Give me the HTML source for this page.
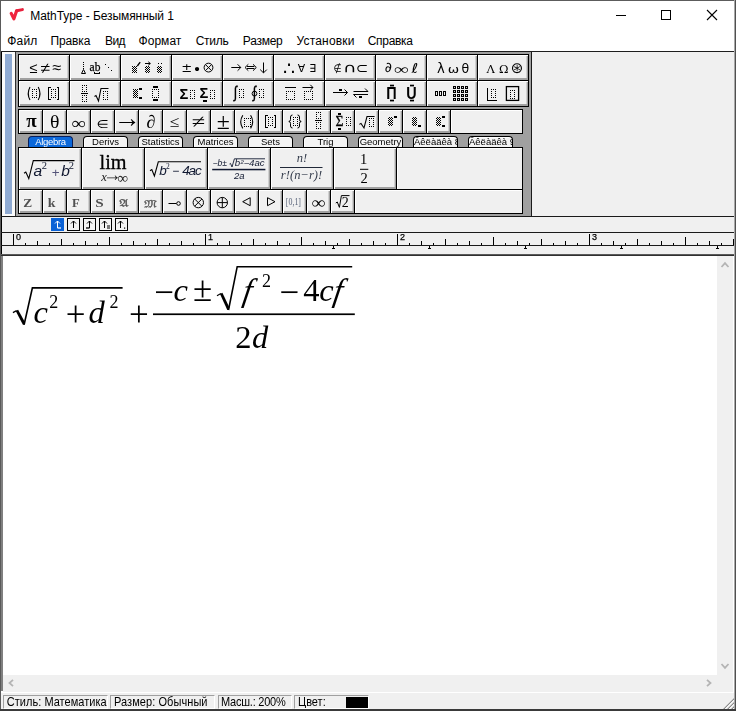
<!DOCTYPE html>
<html lang="ru"><head><meta charset="utf-8"><title>MathType - Безымянный 1</title>
<style>
html,body{margin:0;padding:0}
body{width:736px;height:711px;position:relative;overflow:hidden;background:#f0f0f0;font-family:"Liberation Sans",sans-serif;color:#000}
body>div,body>span,body>svg,.a{position:absolute}
span{white-space:nowrap}
.t12{font-size:12px;line-height:14px}
.b{background:#f0f0f0;box-sizing:border-box;box-shadow:inset 1px 1px 0 #fff,inset -1px 0 0 #a0a0a0,inset 0 -2px 0 #a0a0a0,inset -2px 0 0 #d0d0d0}
.b.e{box-shadow:inset 1px 1px 0 #fff}
.tab{width:45px;height:11px;box-sizing:border-box;border:1px solid #000;border-bottom:none;border-radius:4px 4px 0 0;background:#f4f4f4;font-size:9.5px;line-height:10px;text-align:center;overflow:hidden;box-shadow:inset 1px 1px 0 #fff}
.tab span{position:relative;top:-0.5px}
.tab.sel{background:#0b68da;border-color:#0a1e58;color:#fff;box-shadow:none}
.rl{font-size:9px;line-height:9px;color:#000;will-change:transform;-webkit-text-stroke:0.25px #000}
.pn,.tab{will-change:transform}
.pn{box-sizing:border-box;border:1px solid;border-color:#a0a0a0 #fff #fff #a0a0a0;font-size:11px;line-height:12px;overflow:hidden;height:13px}
.pn span{position:absolute;left:4px;top:0;transform:scaleY(1.09);transform-origin:0 10px}
</style></head>
<body>
<div class="a" style="left:0;top:0;width:736px;height:51px;background:#fff"></div>
<svg class="a" style="left:4px;top:2px" width="26" height="24" viewBox="4 2 26 24"><path d="M11.2 13.4 L13.9 18.8 L16.6 10.8" fill="none" stroke="#f0243e" stroke-width="3.2" stroke-linecap="round" stroke-linejoin="round"/><path d="M16.8 10.7 L22.4 9.6" fill="none" stroke="#e8203c" stroke-width="3" stroke-linecap="round"/></svg>
<span class="t12" style="left:30.3px;top:8.6px;letter-spacing:-0.07px">MathType - Безымянный 1</span>
<svg class="a" style="left:610px;top:5px" width="115" height="20" viewBox="0 0 115 20" shape-rendering="crispEdges"><rect x="6" y="10" width="10" height="1" fill="#000"/><rect x="51.5" y="5.5" width="9" height="9" fill="none" stroke="#000" stroke-width="1"/><g shape-rendering="auto"><path d="M97 5 L107 15 M107 5 L97 15" stroke="#000" stroke-width="1.1" fill="none"/></g></svg>
<span class="t12 mn" style="left:7.3px;top:33.7px;letter-spacing:0.15px">Файл</span>
<span class="t12 mn" style="left:50.6px;top:33.7px;letter-spacing:-0.15px">Правка</span>
<span class="t12 mn" style="left:105.1px;top:33.7px;letter-spacing:-0.70px">Вид</span>
<span class="t12 mn" style="left:138.6px;top:33.7px;letter-spacing:0.02px">Формат</span>
<span class="t12 mn" style="left:195.7px;top:33.7px;letter-spacing:-0.28px">Стиль</span>
<span class="t12 mn" style="left:242.8px;top:33.7px;letter-spacing:-0.25px">Размер</span>
<span class="t12 mn" style="left:296.6px;top:33.7px;letter-spacing:0.16px">Установки</span>
<span class="t12 mn" style="left:367.7px;top:33.7px;letter-spacing:-0.29px">Справка</span>
<div style="left:0px;top:51px;width:736px;height:1px;background:#1e1e1e;"></div>
<div style="left:1px;top:52px;width:1px;height:204px;background:#000;"></div>
<div style="left:2px;top:52px;width:13px;height:164px;background:#fbfbfb;"></div>
<div style="left:15px;top:52px;width:1px;height:164px;background:#303030;"></div>
<div style="left:5px;top:54px;width:7px;height:160px;background:#90abd3;"></div>
<div style="left:16px;top:52px;width:515px;height:164px;background:#a0a0a0;"></div>
<div style="left:531px;top:52px;width:1px;height:165px;background:#1a1a1a;"></div>
<div style="left:18px;top:54px;width:511px;height:53px;background:#000;"></div>
<div style="left:18px;top:109px;width:505px;height:25px;background:#000;"></div>
<div style="left:18px;top:147px;width:505px;height:67px;background:#000;"></div>
<div class="b" style="left:19px;top:55px;width:50px;height:25px"></div>
<div class="b" style="left:70px;top:55px;width:50px;height:25px"></div>
<div class="b" style="left:121px;top:55px;width:50px;height:25px"></div>
<div class="b" style="left:172px;top:55px;width:50px;height:25px"></div>
<div class="b" style="left:223px;top:55px;width:50px;height:25px"></div>
<div class="b" style="left:274px;top:55px;width:50px;height:25px"></div>
<div class="b" style="left:325px;top:55px;width:50px;height:25px"></div>
<div class="b" style="left:376px;top:55px;width:50px;height:25px"></div>
<div class="b" style="left:427px;top:55px;width:50px;height:25px"></div>
<div class="b" style="left:478px;top:55px;width:50px;height:25px"></div>
<div class="b" style="left:19px;top:81px;width:50px;height:25px"></div>
<div class="b" style="left:70px;top:81px;width:50px;height:25px"></div>
<div class="b" style="left:121px;top:81px;width:50px;height:25px"></div>
<div class="b" style="left:172px;top:81px;width:50px;height:25px"></div>
<div class="b" style="left:223px;top:81px;width:50px;height:25px"></div>
<div class="b" style="left:274px;top:81px;width:50px;height:25px"></div>
<div class="b" style="left:325px;top:81px;width:50px;height:25px"></div>
<div class="b" style="left:376px;top:81px;width:50px;height:25px"></div>
<div class="b" style="left:427px;top:81px;width:50px;height:25px"></div>
<div class="b" style="left:478px;top:81px;width:50px;height:25px"></div>
<div class="b" style="left:19px;top:110px;width:23px;height:23px"></div>
<div class="b" style="left:43px;top:110px;width:23px;height:23px"></div>
<div class="b" style="left:67px;top:110px;width:23px;height:23px"></div>
<div class="b" style="left:91px;top:110px;width:23px;height:23px"></div>
<div class="b" style="left:115px;top:110px;width:23px;height:23px"></div>
<div class="b" style="left:139px;top:110px;width:23px;height:23px"></div>
<div class="b" style="left:163px;top:110px;width:23px;height:23px"></div>
<div class="b" style="left:187px;top:110px;width:23px;height:23px"></div>
<div class="b" style="left:211px;top:110px;width:23px;height:23px"></div>
<div class="b" style="left:235px;top:110px;width:23px;height:23px"></div>
<div class="b" style="left:259px;top:110px;width:23px;height:23px"></div>
<div class="b" style="left:283px;top:110px;width:23px;height:23px"></div>
<div class="b" style="left:307px;top:110px;width:23px;height:23px"></div>
<div class="b" style="left:331px;top:110px;width:23px;height:23px"></div>
<div class="b" style="left:355px;top:110px;width:23px;height:23px"></div>
<div class="b" style="left:379px;top:110px;width:23px;height:23px"></div>
<div class="b" style="left:403px;top:110px;width:23px;height:23px"></div>
<div class="b" style="left:427px;top:110px;width:23px;height:23px"></div>
<div class="b e" style="left:451px;top:110px;width:71px;height:23px"></div>
<div class="b" style="left:19px;top:148px;width:62px;height:41px"></div>
<div class="b" style="left:82px;top:148px;width:62px;height:41px"></div>
<div class="b" style="left:145px;top:148px;width:62px;height:41px"></div>
<div class="b" style="left:208px;top:148px;width:62px;height:41px"></div>
<div class="b" style="left:271px;top:148px;width:62px;height:41px"></div>
<div class="b" style="left:334px;top:148px;width:62px;height:41px"></div>
<div class="b e" style="left:397px;top:148px;width:125px;height:41px"></div>
<div class="b" style="left:19px;top:190px;width:23px;height:23px"></div>
<div class="b" style="left:43px;top:190px;width:23px;height:23px"></div>
<div class="b" style="left:67px;top:190px;width:23px;height:23px"></div>
<div class="b" style="left:91px;top:190px;width:23px;height:23px"></div>
<div class="b" style="left:115px;top:190px;width:23px;height:23px"></div>
<div class="b" style="left:139px;top:190px;width:23px;height:23px"></div>
<div class="b" style="left:163px;top:190px;width:23px;height:23px"></div>
<div class="b" style="left:187px;top:190px;width:23px;height:23px"></div>
<div class="b" style="left:211px;top:190px;width:23px;height:23px"></div>
<div class="b" style="left:235px;top:190px;width:23px;height:23px"></div>
<div class="b" style="left:259px;top:190px;width:23px;height:23px"></div>
<div class="b" style="left:283px;top:190px;width:23px;height:23px"></div>
<div class="b" style="left:307px;top:190px;width:23px;height:23px"></div>
<div class="b" style="left:331px;top:190px;width:23px;height:23px"></div>
<div class="b e" style="left:355px;top:190px;width:167px;height:23px"></div>
<div class="tab sel" style="left:28px;top:136px"><span style="letter-spacing:-0.35px">Algebra</span></div>
<div class="tab" style="left:83px;top:136px"><span>Derivs</span></div>
<div class="tab" style="left:138px;top:136px"><span>Statistics</span></div>
<div class="tab" style="left:193px;top:136px"><span>Matrices</span></div>
<div class="tab" style="left:248px;top:136px"><span>Sets</span></div>
<div class="tab" style="left:303px;top:136px"><span>Trig</span></div>
<div class="tab" style="left:358px;top:136px"><span>Geometry</span></div>
<div class="tab" style="left:413px;top:136px"><span>Âêëàäêà 8</span></div>
<div class="tab" style="left:468px;top:136px"><span>Âêëàäêà 9</span></div>
<div style="left:0px;top:216px;width:736px;height:1px;background:#1a1a1a;"></div>
<div style="left:0px;top:232px;width:736px;height:1px;background:#1a1a1a;"></div>
<div style="left:0px;top:245px;width:736px;height:1px;background:#1a1a1a;"></div>
<div style="left:0px;top:254px;width:736px;height:1px;background:#5a5a5a;"></div>
<div style="left:0px;top:255px;width:736px;height:1px;background:#303030;"></div>
<div style="left:13px;top:234px;width:1px;height:11px;background:#000;"></div>
<div style="left:25px;top:243px;width:1px;height:2px;background:#000;"></div>
<div style="left:37px;top:241px;width:1px;height:4px;background:#000;"></div>
<div style="left:49px;top:243px;width:1px;height:2px;background:#000;"></div>
<div style="left:61px;top:239px;width:1px;height:6px;background:#000;"></div>
<div style="left:73px;top:243px;width:1px;height:2px;background:#000;"></div>
<div style="left:85px;top:241px;width:1px;height:4px;background:#000;"></div>
<div style="left:97px;top:243px;width:1px;height:2px;background:#000;"></div>
<div style="left:109px;top:237px;width:1px;height:8px;background:#000;"></div>
<div style="left:121px;top:243px;width:1px;height:2px;background:#000;"></div>
<div style="left:133px;top:241px;width:1px;height:4px;background:#000;"></div>
<div style="left:145px;top:243px;width:1px;height:2px;background:#000;"></div>
<div style="left:157px;top:239px;width:1px;height:6px;background:#000;"></div>
<div style="left:169px;top:243px;width:1px;height:2px;background:#000;"></div>
<div style="left:181px;top:241px;width:1px;height:4px;background:#000;"></div>
<div style="left:193px;top:243px;width:1px;height:2px;background:#000;"></div>
<div style="left:205px;top:234px;width:1px;height:11px;background:#000;"></div>
<div style="left:217px;top:243px;width:1px;height:2px;background:#000;"></div>
<div style="left:229px;top:241px;width:1px;height:4px;background:#000;"></div>
<div style="left:241px;top:243px;width:1px;height:2px;background:#000;"></div>
<div style="left:253px;top:239px;width:1px;height:6px;background:#000;"></div>
<div style="left:265px;top:243px;width:1px;height:2px;background:#000;"></div>
<div style="left:277px;top:241px;width:1px;height:4px;background:#000;"></div>
<div style="left:289px;top:243px;width:1px;height:2px;background:#000;"></div>
<div style="left:301px;top:237px;width:1px;height:8px;background:#000;"></div>
<div style="left:313px;top:243px;width:1px;height:2px;background:#000;"></div>
<div style="left:325px;top:241px;width:1px;height:4px;background:#000;"></div>
<div style="left:337px;top:243px;width:1px;height:2px;background:#000;"></div>
<div style="left:349px;top:239px;width:1px;height:6px;background:#000;"></div>
<div style="left:361px;top:243px;width:1px;height:2px;background:#000;"></div>
<div style="left:373px;top:241px;width:1px;height:4px;background:#000;"></div>
<div style="left:385px;top:243px;width:1px;height:2px;background:#000;"></div>
<div style="left:397px;top:234px;width:1px;height:11px;background:#000;"></div>
<div style="left:409px;top:243px;width:1px;height:2px;background:#000;"></div>
<div style="left:421px;top:241px;width:1px;height:4px;background:#000;"></div>
<div style="left:433px;top:243px;width:1px;height:2px;background:#000;"></div>
<div style="left:445px;top:239px;width:1px;height:6px;background:#000;"></div>
<div style="left:457px;top:243px;width:1px;height:2px;background:#000;"></div>
<div style="left:469px;top:241px;width:1px;height:4px;background:#000;"></div>
<div style="left:481px;top:243px;width:1px;height:2px;background:#000;"></div>
<div style="left:493px;top:237px;width:1px;height:8px;background:#000;"></div>
<div style="left:505px;top:243px;width:1px;height:2px;background:#000;"></div>
<div style="left:517px;top:241px;width:1px;height:4px;background:#000;"></div>
<div style="left:529px;top:243px;width:1px;height:2px;background:#000;"></div>
<div style="left:541px;top:239px;width:1px;height:6px;background:#000;"></div>
<div style="left:553px;top:243px;width:1px;height:2px;background:#000;"></div>
<div style="left:565px;top:241px;width:1px;height:4px;background:#000;"></div>
<div style="left:577px;top:243px;width:1px;height:2px;background:#000;"></div>
<div style="left:589px;top:234px;width:1px;height:11px;background:#000;"></div>
<div style="left:601px;top:243px;width:1px;height:2px;background:#000;"></div>
<div style="left:613px;top:241px;width:1px;height:4px;background:#000;"></div>
<div style="left:625px;top:243px;width:1px;height:2px;background:#000;"></div>
<div style="left:637px;top:239px;width:1px;height:6px;background:#000;"></div>
<div style="left:649px;top:243px;width:1px;height:2px;background:#000;"></div>
<div style="left:661px;top:241px;width:1px;height:4px;background:#000;"></div>
<div style="left:673px;top:243px;width:1px;height:2px;background:#000;"></div>
<div style="left:685px;top:237px;width:1px;height:8px;background:#000;"></div>
<div style="left:697px;top:243px;width:1px;height:2px;background:#000;"></div>
<div style="left:709px;top:241px;width:1px;height:4px;background:#000;"></div>
<div style="left:721px;top:243px;width:1px;height:2px;background:#000;"></div>
<div style="left:733px;top:239px;width:1px;height:6px;background:#000;"></div>
<span class="rl" style="left:16px;top:233.4px;">0</span>
<span class="rl" style="left:208px;top:233.4px;">1</span>
<span class="rl" style="left:400px;top:233.4px;">2</span>
<span class="rl" style="left:592px;top:233.4px;">3</span>
<div style="left:333px;top:246px;width:1px;height:3px;background:#000;"></div>
<div style="left:332px;top:248px;width:3px;height:1px;background:#000;"></div>
<div style="left:429px;top:246px;width:1px;height:3px;background:#000;"></div>
<div style="left:428px;top:248px;width:3px;height:1px;background:#000;"></div>
<div style="left:525px;top:246px;width:1px;height:3px;background:#000;"></div>
<div style="left:524px;top:248px;width:3px;height:1px;background:#000;"></div>
<div style="left:621px;top:246px;width:1px;height:3px;background:#000;"></div>
<div style="left:620px;top:248px;width:3px;height:1px;background:#000;"></div>
<div style="left:717px;top:246px;width:1px;height:3px;background:#000;"></div>
<div style="left:716px;top:248px;width:3px;height:1px;background:#000;"></div>
<svg class="a" style="left:51px;top:218px" width="13" height="13" viewBox="0 0 13 13"><rect x="0.5" y="0.5" width="12" height="12" fill="#0b62d6" stroke="#0b62d6"/><path d="M6.5 3 V10 M4 5.5 L6.5 3 L9 5.5" fill="none" stroke="#fff" stroke-width="1"/><path d="M6.5 10 H10" stroke="#fff" stroke-width="1.3" fill="none"/></svg>
<svg class="a" style="left:67px;top:218px" width="13" height="13" viewBox="0 0 13 13"><rect x="0.5" y="0.5" width="12" height="12" fill="#f4f4f4" stroke="#000"/><path d="M6.5 3 V10 M4 5.5 L6.5 3 L9 5.5" fill="none" stroke="#000" stroke-width="1"/></svg>
<svg class="a" style="left:83px;top:218px" width="13" height="13" viewBox="0 0 13 13"><rect x="0.5" y="0.5" width="12" height="12" fill="#f4f4f4" stroke="#000"/><path d="M6.5 3 V10 M4 5.5 L6.5 3 L9 5.5" fill="none" stroke="#000" stroke-width="1"/><path d="M6.5 10 H3" stroke="#000" stroke-width="1.3" fill="none"/></svg>
<svg class="a" style="left:99px;top:218px" width="13" height="13" viewBox="0 0 13 13"><rect x="0.5" y="0.5" width="12" height="12" fill="#f4f4f4" stroke="#000"/><path d="M5.5 3 V10 M3 5.5 L5.5 3 L8 5.5" fill="none" stroke="#000" stroke-width="1"/><path d="M8 8 H11 M8 10 H11" stroke="#000" stroke-width="1" fill="none"/></svg>
<svg class="a" style="left:115px;top:218px" width="13" height="13" viewBox="0 0 13 13"><rect x="0.5" y="0.5" width="12" height="12" fill="#f4f4f4" stroke="#000"/><path d="M5.5 3 V10 M3 5.5 L5.5 3 L8 5.5" fill="none" stroke="#000" stroke-width="1"/><rect x="9" y="9.5" width="1.2" height="1.2" fill="#000"/></svg>
<div style="left:0px;top:256px;width:736px;height:436px;background:#fff;"></div>
<div style="left:1px;top:256px;width:2px;height:435px;background:#808080;"></div>
<div style="left:717px;top:256px;width:17px;height:419px;background:#f0f0f0;"></div>
<div style="left:3px;top:675px;width:731px;height:17px;background:#f0f0f0;"></div>
<svg class="a" style="left:720px;top:260px" width="10" height="10" viewBox="0 0 10 10"><path d="M1.5 7 L5 3.2 L8.5 7" fill="none" stroke="#b4b4b4" stroke-width="1.8"/></svg>
<svg class="a" style="left:720px;top:661.3px" width="10" height="10" viewBox="0 0 10 10"><path d="M1.5 3 L5 6.8 L8.5 3" fill="none" stroke="#b4b4b4" stroke-width="1.8"/></svg>
<svg class="a" style="left:6px;top:677.5px" width="10" height="10" viewBox="0 0 10 10"><path d="M7 1.8 L3.5 5 L7 8.2" fill="none" stroke="#b4b4b4" stroke-width="1.8"/></svg>
<svg class="a" style="left:704px;top:677.5px" width="10" height="10" viewBox="0 0 10 10"><path d="M3 1.8 L6.5 5 L3 8.2" fill="none" stroke="#b4b4b4" stroke-width="1.8"/></svg>
<div style="left:0px;top:692px;width:736px;height:1px;background:#fff;"></div>
<div style="left:0px;top:693px;width:736px;height:17px;background:#f0f0f0;"></div>
<div class="pn" style="left:3px;top:695px;width:105px;height:14px"><span style="left:2.8px;letter-spacing:0.03px">Стиль: Математика</span></div>
<div class="pn" style="left:110px;top:695px;width:105px;height:14px"><span style="left:3px;letter-spacing:0.07px">Размер: Обычный</span></div>
<div class="pn" style="left:218px;top:695px;width:74px;height:14px"><span style="left:2px;letter-spacing:-0.23px">Масш.: 200%</span></div>
<div class="pn" style="left:294px;top:695px;width:75px;height:14px"><span style="left:3px;letter-spacing:0px">Цвет:</span></div>
<div style="left:346px;top:697px;width:22px;height:11px;background:#000;"></div>
<svg class="a" style="left:722px;top:697px" width="13" height="13" viewBox="0 0 13 13"><path d="M1 13 L13 1 M5 13 L13 5 M9 13 L13 9" stroke="#8c8c8c" stroke-width="1.3" fill="none"/><path d="M2.2 13 L13 2.2 M6.2 13 L13 6.2 M10.2 13 L13 10.2" stroke="#fff" stroke-width="1" fill="none"/></svg>
<div style="left:0px;top:0px;width:736px;height:1px;background:#5c5c5c;"></div>
<div style="left:0px;top:0px;width:1px;height:711px;background:#5a5a5a;"></div>
<div style="left:734px;top:0px;width:1px;height:711px;background:#a8a8a8;"></div>
<div style="left:735px;top:0px;width:1px;height:711px;background:#505050;"></div>
<div style="left:0px;top:709px;width:736px;height:2px;background:#3a3a3a;"></div>
<div style="left:733px;top:256px;width:1px;height:436px;background:#fff;"></div>
<svg class="a" style="left:0;top:0;will-change:transform" width="736" height="711" viewBox="0 0 736 711"><defs><pattern id="ck" width="2" height="2" patternUnits="userSpaceOnUse"><rect x="0" y="0" width="1" height="1" fill="#000"/><rect x="1" y="1" width="1" height="1" fill="#000"/></pattern></defs>
<path d="M12.9 312.6 L16.6 310.6" stroke="#000" stroke-width="1.2" fill="none" />
<path d="M15.700000000000001 311.1 L18.1 309.70000000000005 L25.0 322.3 L24.1 324.8 L22.900000000000002 324.8 Z" fill="#000"/>
<path d="M24.1 324.7 L32.4 287.9 H122.6" stroke="#000" stroke-width="1.6" fill="none" stroke-linejoin="miter"/>
<text x="33.50" y="323.00" font-family="Liberation Serif,serif" font-style="italic" font-size="32.5" fill="#000" >c</text>
<text x="49.21" y="307.90" font-family="Liberation Serif,serif" font-size="18" fill="#000" >2</text>
<text x="65.71" y="326.02" font-family="Liberation Serif,serif" font-size="35" fill="#000" >+</text>
<text x="88.52" y="323.00" font-family="Liberation Serif,serif" font-style="italic" font-size="32.5" fill="#000" >d</text>
<text x="109.51" y="308.00" font-family="Liberation Serif,serif" font-size="18" fill="#000" >2</text>
<text x="128.91" y="326.02" font-family="Liberation Serif,serif" font-size="35" fill="#000" >+</text>
<rect x="153" y="313.4" width="201.8" height="1.7" fill="#000"/>
<text x="154.31" y="304.22" font-family="Liberation Serif,serif" font-size="35" fill="#000" >−</text>
<text x="173.60" y="300.70" font-family="Liberation Serif,serif" font-style="italic" font-size="32.5" fill="#000" >c</text>
<text x="192.90" y="300.90" font-family="Liberation Serif,serif" font-size="35" fill="#000" >±</text>
<path d="M217 295.8 L220.9 293.6" stroke="#000" stroke-width="1.2" fill="none" />
<path d="M220.0 294.1 L222.4 292.70000000000005 L229.4 307.6 L228.5 310.1 L227.3 310.1 Z" fill="#000"/>
<path d="M228.5 310.0 L237.2 266.7 H352.2" stroke="#000" stroke-width="1.6" fill="none" stroke-linejoin="miter"/>
<text x="241.63" y="300.70" font-family="Liberation Serif,serif" font-style="italic" font-size="32.5" fill="#000" transform="translate(248.2 300.7) skewX(-9) translate(-248.2 -300.7)">f</text>
<text x="262.11" y="286.50" font-family="Liberation Serif,serif" font-size="18" fill="#000" >2</text>
<text x="279.41" y="304.22" font-family="Liberation Serif,serif" font-size="35" fill="#000" >−</text>
<text x="303.37" y="300.70" font-family="Liberation Serif,serif" font-size="32.5" fill="#000" >4</text>
<text x="319.20" y="300.70" font-family="Liberation Serif,serif" font-style="italic" font-size="32.5" fill="#000" >c</text>
<text x="332.23" y="300.70" font-family="Liberation Serif,serif" font-style="italic" font-size="32.5" fill="#000" transform="translate(338.8 300.7) skewX(-9) translate(-338.8 -300.7)">f</text>
<text x="235.37" y="347.70" font-family="Liberation Serif,serif" font-size="32.5" fill="#000" >2</text>
<text x="252.12" y="347.70" font-family="Liberation Serif,serif" font-style="italic" font-size="32.5" fill="#000" >d</text>
<g id="row1">
<text x="29.14" y="73.00" font-family="Liberation Sans,sans-serif" font-size="14.64" fill="#000" >≤</text>
<text x="41.56" y="73.39" font-family="Liberation Sans,sans-serif" font-size="14.52" fill="#000"  transform="translate(45.55 0) scale(1.205 1) translate(-45.55 0)">≠</text>
<text x="52.56" y="73.48" font-family="Liberation Sans,sans-serif" font-size="16.19" fill="#000" >≈</text>
<rect x="83" y="62" width="1" height="1" fill="#000"/>
<rect x="83" y="64" width="1" height="1" fill="#000"/>
<rect x="83" y="66" width="1" height="1" fill="#000"/>
<rect x="83" y="68" width="1" height="1" fill="#000"/>
<path d="M83.5 69.5 L81.5 73.5 H85.5 Z" stroke="#000" stroke-width="1" fill="none" />
<text x="89.6" y="70.8" font-family="Liberation Serif,serif" font-size="11.5" stroke="#000" stroke-width="0.25">ab</text>
<path d="M94.5 71.5 V73.5 H99.5 V71.5" stroke="#000" stroke-width="1" fill="none" shape-rendering="crispEdges"/>
<rect x="105" y="64" width="1" height="1" fill="#000"/>
<rect x="108" y="67" width="1" height="1" fill="#000"/>
<rect x="111" y="70" width="1" height="1" fill="#000"/>
<rect x="132" y="66" width="5" height="7" fill="url(#ck)" shape-rendering="crispEdges"/>
<path d="M137.3 66 L140.2 62.2" stroke="#000" stroke-width="1.3" fill="none" />
<rect x="145" y="66" width="5" height="7" fill="url(#ck)" shape-rendering="crispEdges"/>
<path d="M145 63.5 H150.3 M148.3 61.8 L150.3 63.5 L148.3 65.2" stroke="#000" stroke-width="1" fill="none" />
<rect x="157" y="66" width="5" height="7" fill="url(#ck)" shape-rendering="crispEdges"/>
<rect x="158" y="63" width="1" height="1" fill="#000"/>
<rect x="161" y="63" width="1" height="1" fill="#000"/>
<text x="181.17" y="72.20" font-family="DejaVu Sans,sans-serif" font-size="13.08" fill="#000" >±</text>
<text x="192.86" y="73.70" font-family="DejaVu Sans,sans-serif" font-size="14.53" fill="#000" >•</text>
<circle cx="208.5" cy="67.6" r="4.4" fill="none" stroke="#000"/>
<path d="M205.5 64.6 L211.5 70.6 M211.5 64.6 L205.5 70.6" stroke="#000" stroke-width="1" fill="none" />
<path d="M231.3 67.5 H240.8 M237.6 64.3 L240.8 67.5 L237.6 70.7" stroke="#000" stroke-width="1" fill="none" />
<path d="M247 66.5 H254.3 M247 68.5 H254.3 M248.3 64.3 L245 67.5 L248.3 70.7 M253 64.3 L256.3 67.5 L253 70.7" stroke="#000" stroke-width="1" fill="none" />
<path d="M263.5 62.5 V72.8 M260.2 69.6 L263.5 72.9 L266.8 69.6" stroke="#000" stroke-width="1" fill="none" />
<text x="282.88" y="74.76" font-family="DejaVu Sans,sans-serif" font-size="18.92" fill="#000" >∴</text>
<text x="297.79" y="72.10" font-family="DejaVu Sans,sans-serif" font-size="10.84" fill="#000" >∀</text>
<text x="309.19" y="72.10" font-family="DejaVu Sans,sans-serif" font-size="10.84" fill="#000" >∃</text>
<text x="333.09" y="71.55" font-family="DejaVu Sans,sans-serif" font-size="10.48" fill="#000"  transform="translate(337.65 0) scale(0.886 1) translate(-337.65 0)">∉</text>
<text x="344.86" y="72.10" font-family="DejaVu Sans,sans-serif" font-size="12.95" fill="#000"  transform="translate(349.6 0) scale(1.433 1) translate(-349.6 0)">∩</text>
<text x="356.34" y="72.84" font-family="DejaVu Sans,sans-serif" font-size="14.35" fill="#000"  transform="translate(362.35 0) scale(1.037 1) translate(-362.35 0)">⊂</text>
<text x="384.73" y="72.20" font-family="DejaVu Sans,sans-serif" font-size="14.2" fill="#000"  transform="translate(388.4 0) scale(0.963 1) translate(-388.4 0)">∂</text>
<text x="396.30" y="74.01" font-family="Liberation Serif,serif" font-size="14.18" fill="#000"  transform="translate(401.35 0) scale(1.472 1) translate(-401.35 0)">∞</text>
<text x="411.95" y="72.80" font-family="DejaVu Sans,sans-serif" font-size="13.88" fill="#000"  transform="translate(414.3 0) scale(1.18 1) translate(-414.3 0)">ℓ</text>
<text x="436.83" y="72.70" font-family="DejaVu Sans,sans-serif" font-size="13.43" fill="#000"  transform="translate(440.8 0) scale(0.979 1) translate(-440.8 0)">λ</text>
<text x="448.71" y="72.54" font-family="DejaVu Sans,sans-serif" font-size="11.23" fill="#000"  transform="translate(453.4 0) scale(1.216 1) translate(-453.4 0)">ω</text>
<text x="461.44" y="72.55" font-family="DejaVu Sans,sans-serif" font-size="13.1" fill="#000"  transform="translate(465.45000000000005 0) scale(0.958 1) translate(-465.45000000000005 0)">θ</text>
<text x="486.42" y="72.70" font-family="DejaVu Serif,serif" font-size="11.66" fill="#000" >Λ</text>
<text x="499.00" y="72.70" font-family="DejaVu Serif,serif" font-size="11.45" fill="#000" >Ω</text>
<text x="510.72" y="73.39" font-family="DejaVu Sans,sans-serif" font-size="15.23" fill="#000" >⊛</text>
</g>
<g id="row2">
<path d="M30.0 87 Q26.48 93.5 30.0 100" stroke="#000" stroke-width="1.1" fill="none" />
<path d="M38.199999999999996 87 Q41.72 93.5 38.199999999999996 100" stroke="#000" stroke-width="1.1" fill="none" />
<rect x="32" y="89" width="1" height="1" fill="#000"/>
<rect x="32" y="91" width="1" height="1" fill="#000"/>
<rect x="32" y="93" width="1" height="1" fill="#000"/>
<rect x="32" y="95" width="1" height="1" fill="#000"/>
<rect x="32" y="97" width="1" height="1" fill="#000"/>
<rect x="34" y="89" width="1" height="1" fill="#000"/>
<rect x="34" y="97" width="1" height="1" fill="#000"/>
<rect x="36" y="89" width="1" height="1" fill="#000"/>
<rect x="36" y="91" width="1" height="1" fill="#000"/>
<rect x="36" y="93" width="1" height="1" fill="#000"/>
<rect x="36" y="95" width="1" height="1" fill="#000"/>
<rect x="36" y="97" width="1" height="1" fill="#000"/>
<path d="M50.5 87.5 H48.5 V99.5 H50.5" stroke="#000" stroke-width="1" fill="none" shape-rendering="crispEdges"/>
<path d="M56.5 87.5 H58.5 V99.5 H56.5" stroke="#000" stroke-width="1" fill="none" shape-rendering="crispEdges"/>
<rect x="51" y="89" width="1" height="1" fill="#000"/>
<rect x="51" y="91" width="1" height="1" fill="#000"/>
<rect x="51" y="93" width="1" height="1" fill="#000"/>
<rect x="51" y="95" width="1" height="1" fill="#000"/>
<rect x="51" y="97" width="1" height="1" fill="#000"/>
<rect x="53" y="89" width="1" height="1" fill="#000"/>
<rect x="53" y="97" width="1" height="1" fill="#000"/>
<rect x="55" y="89" width="1" height="1" fill="#000"/>
<rect x="55" y="91" width="1" height="1" fill="#000"/>
<rect x="55" y="93" width="1" height="1" fill="#000"/>
<rect x="55" y="95" width="1" height="1" fill="#000"/>
<rect x="55" y="97" width="1" height="1" fill="#000"/>
<rect x="82" y="85" width="1" height="1" fill="#000"/>
<rect x="82" y="87" width="1" height="1" fill="#000"/>
<rect x="82" y="89" width="1" height="1" fill="#000"/>
<rect x="82" y="91" width="1" height="1" fill="#000"/>
<rect x="84" y="85" width="1" height="1" fill="#000"/>
<rect x="84" y="91" width="1" height="1" fill="#000"/>
<rect x="86" y="85" width="1" height="1" fill="#000"/>
<rect x="86" y="87" width="1" height="1" fill="#000"/>
<rect x="86" y="89" width="1" height="1" fill="#000"/>
<rect x="86" y="91" width="1" height="1" fill="#000"/>
<rect x="81" y="93" width="7" height="1" fill="#000"/>
<rect x="82" y="95" width="1" height="1" fill="#000"/>
<rect x="82" y="97" width="1" height="1" fill="#000"/>
<rect x="82" y="99" width="1" height="1" fill="#000"/>
<rect x="82" y="101" width="1" height="1" fill="#000"/>
<rect x="84" y="95" width="1" height="1" fill="#000"/>
<rect x="84" y="101" width="1" height="1" fill="#000"/>
<rect x="86" y="95" width="1" height="1" fill="#000"/>
<rect x="86" y="97" width="1" height="1" fill="#000"/>
<rect x="86" y="99" width="1" height="1" fill="#000"/>
<rect x="86" y="101" width="1" height="1" fill="#000"/>
<path d="M94.5 96.5 L96 95.5 L98.5 101 L101 88.5 H108.5" stroke="#000" stroke-width="1.1" fill="none" />
<rect x="103" y="91" width="1" height="1" fill="#000"/>
<rect x="103" y="93" width="1" height="1" fill="#000"/>
<rect x="103" y="95" width="1" height="1" fill="#000"/>
<rect x="103" y="97" width="1" height="1" fill="#000"/>
<rect x="103" y="99" width="1" height="1" fill="#000"/>
<rect x="105" y="91" width="1" height="1" fill="#000"/>
<rect x="105" y="99" width="1" height="1" fill="#000"/>
<rect x="107" y="91" width="1" height="1" fill="#000"/>
<rect x="107" y="93" width="1" height="1" fill="#000"/>
<rect x="107" y="95" width="1" height="1" fill="#000"/>
<rect x="107" y="97" width="1" height="1" fill="#000"/>
<rect x="107" y="99" width="1" height="1" fill="#000"/>
<rect x="133" y="89" width="5" height="9" fill="url(#ck)" shape-rendering="crispEdges"/>
<rect x="139" y="88" width="3" height="2" fill="#000"/>
<rect x="139" y="97" width="3" height="2" fill="#000"/>
<rect x="153" y="86" width="5" height="2" fill="#000"/>
<rect x="152" y="89" width="1" height="1" fill="#000"/>
<rect x="152" y="91" width="1" height="1" fill="#000"/>
<rect x="152" y="93" width="1" height="1" fill="#000"/>
<rect x="152" y="95" width="1" height="1" fill="#000"/>
<rect x="152" y="97" width="1" height="1" fill="#000"/>
<rect x="154" y="89" width="1" height="1" fill="#000"/>
<rect x="154" y="97" width="1" height="1" fill="#000"/>
<rect x="156" y="89" width="1" height="1" fill="#000"/>
<rect x="156" y="97" width="1" height="1" fill="#000"/>
<rect x="158" y="89" width="1" height="1" fill="#000"/>
<rect x="158" y="91" width="1" height="1" fill="#000"/>
<rect x="158" y="93" width="1" height="1" fill="#000"/>
<rect x="158" y="95" width="1" height="1" fill="#000"/>
<rect x="158" y="97" width="1" height="1" fill="#000"/>
<rect x="153" y="99" width="5" height="2" fill="#000"/>
<text x="179.6" y="98.8" font-family="Liberation Sans,sans-serif" font-weight="bold" font-size="15" textLength="8.8" lengthAdjust="spacingAndGlyphs">Σ</text>
<rect x="190" y="90" width="1" height="1" fill="#000"/>
<rect x="190" y="92" width="1" height="1" fill="#000"/>
<rect x="190" y="94" width="1" height="1" fill="#000"/>
<rect x="190" y="96" width="1" height="1" fill="#000"/>
<rect x="190" y="98" width="1" height="1" fill="#000"/>
<rect x="192" y="90" width="1" height="1" fill="#000"/>
<rect x="192" y="98" width="1" height="1" fill="#000"/>
<rect x="194" y="90" width="1" height="1" fill="#000"/>
<rect x="194" y="92" width="1" height="1" fill="#000"/>
<rect x="194" y="94" width="1" height="1" fill="#000"/>
<rect x="194" y="96" width="1" height="1" fill="#000"/>
<rect x="194" y="98" width="1" height="1" fill="#000"/>
<text x="199.6" y="97.6" font-family="Liberation Sans,sans-serif" font-weight="bold" font-size="14" textLength="8.8" lengthAdjust="spacingAndGlyphs">Σ</text>
<rect x="203" y="100" width="4" height="2" fill="#000"/>
<rect x="210" y="90" width="1" height="1" fill="#000"/>
<rect x="210" y="92" width="1" height="1" fill="#000"/>
<rect x="210" y="94" width="1" height="1" fill="#000"/>
<rect x="210" y="96" width="1" height="1" fill="#000"/>
<rect x="210" y="98" width="1" height="1" fill="#000"/>
<rect x="212" y="90" width="1" height="1" fill="#000"/>
<rect x="212" y="98" width="1" height="1" fill="#000"/>
<rect x="214" y="90" width="1" height="1" fill="#000"/>
<rect x="214" y="92" width="1" height="1" fill="#000"/>
<rect x="214" y="94" width="1" height="1" fill="#000"/>
<rect x="214" y="96" width="1" height="1" fill="#000"/>
<rect x="214" y="98" width="1" height="1" fill="#000"/>
<text x="233.10" y="97.75" font-family="Liberation Sans,sans-serif" font-size="16.78" fill="#000" transform="translate(235.3 0) scale(0.74 1) translate(-235.3 0)" stroke="#000" stroke-width="0.4">∫</text>
<rect x="239" y="89" width="1" height="1" fill="#000"/>
<rect x="239" y="91" width="1" height="1" fill="#000"/>
<rect x="239" y="93" width="1" height="1" fill="#000"/>
<rect x="239" y="95" width="1" height="1" fill="#000"/>
<rect x="239" y="97" width="1" height="1" fill="#000"/>
<rect x="241" y="89" width="1" height="1" fill="#000"/>
<rect x="241" y="97" width="1" height="1" fill="#000"/>
<rect x="243" y="89" width="1" height="1" fill="#000"/>
<rect x="243" y="91" width="1" height="1" fill="#000"/>
<rect x="243" y="93" width="1" height="1" fill="#000"/>
<rect x="243" y="95" width="1" height="1" fill="#000"/>
<rect x="243" y="97" width="1" height="1" fill="#000"/>
<text x="252.30" y="97.75" font-family="Liberation Sans,sans-serif" font-size="16.78" fill="#000" transform="translate(254.5 0) scale(0.74 1) translate(-254.5 0)" stroke="#000" stroke-width="0.4">∫</text>
<circle cx="254.5" cy="93.6" r="2.4" fill="none" stroke="#000" stroke-width="1"/>
<rect x="259" y="89" width="1" height="1" fill="#000"/>
<rect x="259" y="91" width="1" height="1" fill="#000"/>
<rect x="259" y="93" width="1" height="1" fill="#000"/>
<rect x="259" y="95" width="1" height="1" fill="#000"/>
<rect x="259" y="97" width="1" height="1" fill="#000"/>
<rect x="261" y="89" width="1" height="1" fill="#000"/>
<rect x="261" y="97" width="1" height="1" fill="#000"/>
<rect x="263" y="89" width="1" height="1" fill="#000"/>
<rect x="263" y="91" width="1" height="1" fill="#000"/>
<rect x="263" y="93" width="1" height="1" fill="#000"/>
<rect x="263" y="95" width="1" height="1" fill="#000"/>
<rect x="263" y="97" width="1" height="1" fill="#000"/>
<rect x="285" y="87" width="11" height="1" fill="#000"/>
<rect x="286" y="91" width="1" height="1" fill="#000"/>
<rect x="286" y="93" width="1" height="1" fill="#000"/>
<rect x="286" y="95" width="1" height="1" fill="#000"/>
<rect x="286" y="97" width="1" height="1" fill="#000"/>
<rect x="286" y="99" width="1" height="1" fill="#000"/>
<rect x="288" y="91" width="1" height="1" fill="#000"/>
<rect x="288" y="99" width="1" height="1" fill="#000"/>
<rect x="290" y="91" width="1" height="1" fill="#000"/>
<rect x="290" y="99" width="1" height="1" fill="#000"/>
<rect x="292" y="91" width="1" height="1" fill="#000"/>
<rect x="292" y="99" width="1" height="1" fill="#000"/>
<rect x="294" y="91" width="1" height="1" fill="#000"/>
<rect x="294" y="93" width="1" height="1" fill="#000"/>
<rect x="294" y="95" width="1" height="1" fill="#000"/>
<rect x="294" y="97" width="1" height="1" fill="#000"/>
<rect x="294" y="99" width="1" height="1" fill="#000"/>
<path d="M302.5 87.5 H313 M310.3 84.8 L313 87.5 L310.3 90.2" stroke="#000" stroke-width="1" fill="none" />
<rect x="304" y="91" width="1" height="1" fill="#000"/>
<rect x="304" y="93" width="1" height="1" fill="#000"/>
<rect x="304" y="95" width="1" height="1" fill="#000"/>
<rect x="304" y="97" width="1" height="1" fill="#000"/>
<rect x="304" y="99" width="1" height="1" fill="#000"/>
<rect x="306" y="91" width="1" height="1" fill="#000"/>
<rect x="306" y="99" width="1" height="1" fill="#000"/>
<rect x="308" y="91" width="1" height="1" fill="#000"/>
<rect x="308" y="99" width="1" height="1" fill="#000"/>
<rect x="310" y="91" width="1" height="1" fill="#000"/>
<rect x="310" y="99" width="1" height="1" fill="#000"/>
<rect x="312" y="91" width="1" height="1" fill="#000"/>
<rect x="312" y="93" width="1" height="1" fill="#000"/>
<rect x="312" y="95" width="1" height="1" fill="#000"/>
<rect x="312" y="97" width="1" height="1" fill="#000"/>
<rect x="312" y="99" width="1" height="1" fill="#000"/>
<path d="M333 92.5 H347.5 M344.5 89.5 L347.5 92.5 L344.5 95.5" stroke="#000" stroke-width="1" fill="none" />
<rect x="339" y="89" width="3" height="2" fill="#000"/>
<path d="M353.5 91.5 H368 M365 88.5 L368 91.5" stroke="#000" stroke-width="1" fill="none" />
<path d="M368 94.5 H353.5 L356.5 97.5" stroke="#000" stroke-width="1" fill="none" />
<rect x="359" y="96" width="3" height="2" fill="#000"/>
<text x="386.3" y="98.9" font-family="Liberation Sans,sans-serif" font-weight="bold" font-size="16" textLength="10.4" lengthAdjust="spacingAndGlyphs">Π</text>
<rect x="390" y="84.7" width="4" height="1.7" fill="#000"/>
<rect x="390" y="99.7" width="4" height="1.7" fill="#000"/>
<text x="406.2" y="98.9" font-family="Liberation Sans,sans-serif" font-weight="bold" font-size="16" textLength="10.4" lengthAdjust="spacingAndGlyphs">U</text>
<rect x="410" y="84.7" width="4" height="1.7" fill="#000"/>
<rect x="410" y="99.7" width="4" height="1.7" fill="#000"/>
<rect x="435.5" y="91.5" width="2" height="4" fill="none" stroke="#000" shape-rendering="crispEdges"/>
<rect x="439.5" y="91.5" width="2" height="4" fill="none" stroke="#000" shape-rendering="crispEdges"/>
<rect x="443.5" y="91.5" width="2" height="4" fill="none" stroke="#000" shape-rendering="crispEdges"/>
<rect x="453" y="86" width="3" height="3" fill="#000"/>
<rect x="454" y="87" width="1" height="1" fill="#c8c8c8"/>
<rect x="453" y="90" width="3" height="3" fill="#000"/>
<rect x="454" y="91" width="1" height="1" fill="#c8c8c8"/>
<rect x="453" y="94" width="3" height="3" fill="#000"/>
<rect x="454" y="95" width="1" height="1" fill="#c8c8c8"/>
<rect x="453" y="98" width="3" height="3" fill="#000"/>
<rect x="454" y="99" width="1" height="1" fill="#c8c8c8"/>
<rect x="457" y="86" width="3" height="3" fill="#000"/>
<rect x="458" y="87" width="1" height="1" fill="#c8c8c8"/>
<rect x="457" y="90" width="3" height="3" fill="#000"/>
<rect x="458" y="91" width="1" height="1" fill="#c8c8c8"/>
<rect x="457" y="94" width="3" height="3" fill="#000"/>
<rect x="458" y="95" width="1" height="1" fill="#c8c8c8"/>
<rect x="457" y="98" width="3" height="3" fill="#000"/>
<rect x="458" y="99" width="1" height="1" fill="#c8c8c8"/>
<rect x="461" y="86" width="3" height="3" fill="#000"/>
<rect x="462" y="87" width="1" height="1" fill="#c8c8c8"/>
<rect x="461" y="90" width="3" height="3" fill="#000"/>
<rect x="462" y="91" width="1" height="1" fill="#c8c8c8"/>
<rect x="461" y="94" width="3" height="3" fill="#000"/>
<rect x="462" y="95" width="1" height="1" fill="#c8c8c8"/>
<rect x="461" y="98" width="3" height="3" fill="#000"/>
<rect x="462" y="99" width="1" height="1" fill="#c8c8c8"/>
<rect x="465" y="86" width="3" height="3" fill="#000"/>
<rect x="466" y="87" width="1" height="1" fill="#c8c8c8"/>
<rect x="465" y="90" width="3" height="3" fill="#000"/>
<rect x="466" y="91" width="1" height="1" fill="#c8c8c8"/>
<rect x="465" y="94" width="3" height="3" fill="#000"/>
<rect x="466" y="95" width="1" height="1" fill="#c8c8c8"/>
<rect x="465" y="98" width="3" height="3" fill="#000"/>
<rect x="466" y="99" width="1" height="1" fill="#c8c8c8"/>
<path d="M487.5 88 V100.5 H497" stroke="#000" stroke-width="1" fill="none" shape-rendering="crispEdges"/>
<rect x="491" y="89" width="1" height="1" fill="#000"/>
<rect x="491" y="91" width="1" height="1" fill="#000"/>
<rect x="491" y="93" width="1" height="1" fill="#000"/>
<rect x="491" y="95" width="1" height="1" fill="#000"/>
<rect x="491" y="97" width="1" height="1" fill="#000"/>
<rect x="493" y="89" width="1" height="1" fill="#000"/>
<rect x="493" y="97" width="1" height="1" fill="#000"/>
<rect x="495" y="89" width="1" height="1" fill="#000"/>
<rect x="495" y="91" width="1" height="1" fill="#000"/>
<rect x="495" y="93" width="1" height="1" fill="#000"/>
<rect x="495" y="95" width="1" height="1" fill="#000"/>
<rect x="495" y="97" width="1" height="1" fill="#000"/>
<rect x="506.4" y="86.6" width="12.2" height="13.8" fill="none" stroke="#000" stroke-width="1.3"/>
<rect x="510" y="90" width="1" height="1" fill="#000"/>
<rect x="510" y="92" width="1" height="1" fill="#000"/>
<rect x="510" y="94" width="1" height="1" fill="#000"/>
<rect x="510" y="96" width="1" height="1" fill="#000"/>
<rect x="510" y="98" width="1" height="1" fill="#000"/>
<rect x="512" y="90" width="1" height="1" fill="#000"/>
<rect x="512" y="98" width="1" height="1" fill="#000"/>
<rect x="514" y="90" width="1" height="1" fill="#000"/>
<rect x="514" y="92" width="1" height="1" fill="#000"/>
<rect x="514" y="94" width="1" height="1" fill="#000"/>
<rect x="514" y="96" width="1" height="1" fill="#000"/>
<rect x="514" y="98" width="1" height="1" fill="#000"/>
</g>
<g id="row3">
<text x="26.10" y="127.11" font-family="Liberation Serif,serif" font-weight="bold" font-size="19.63" fill="#000"  transform="translate(31.5 0) scale(0.971 1) translate(-31.5 0)">π</text>
<text x="50.08" y="128.21" font-family="Liberation Serif,serif" font-size="19.75" fill="#000" >θ</text>
<text x="72.73" y="128.52" font-family="Liberation Serif,serif" font-size="17.33" fill="#000"  transform="translate(78.9 0) scale(1.141 1) translate(-78.9 0)">∞</text>
<text x="97.54" y="128.29" font-family="DejaVu Sans,sans-serif" font-size="11.39" fill="#000"  transform="translate(102.5 0) scale(1.229 1) translate(-102.5 0)">∈</text>
<text x="113.48" y="126.99" font-family="Liberation Sans,sans-serif" font-size="27.04" fill="#000" >→</text>
<text x="146.56" y="128.16" font-family="Liberation Serif,serif" font-size="18.25" fill="#000" >∂</text>
<text x="170.35" y="127.20" font-family="Liberation Serif,serif" font-size="15.87" fill="#000"  transform="translate(174.7 0) scale(1.11 1) translate(-174.7 0)">≤</text>
<text x="193.21" y="128.07" font-family="Liberation Serif,serif" font-size="18.58" fill="#000"  transform="translate(198.3 0) scale(1.319 1) translate(-198.3 0)">≠</text>
<text x="216.81" y="129.19" font-family="Liberation Serif,serif" font-size="23.85" fill="#000" >±</text>
<path d="M242.79999999999998 115.3 Q238.64 121.85 242.79999999999998 128.4" stroke="#000" stroke-width="1.1" fill="none" />
<path d="M250.6 115.3 Q254.76 121.85 250.6 128.4" stroke="#000" stroke-width="1.1" fill="none" />
<rect x="244" y="118" width="1" height="1" fill="#000"/>
<rect x="244" y="120" width="1" height="1" fill="#000"/>
<rect x="244" y="122" width="1" height="1" fill="#000"/>
<rect x="244" y="124" width="1" height="1" fill="#000"/>
<rect x="244" y="126" width="1" height="1" fill="#000"/>
<rect x="246" y="118" width="1" height="1" fill="#000"/>
<rect x="246" y="126" width="1" height="1" fill="#000"/>
<rect x="248" y="118" width="1" height="1" fill="#000"/>
<rect x="248" y="126" width="1" height="1" fill="#000"/>
<rect x="250" y="118" width="1" height="1" fill="#000"/>
<rect x="250" y="120" width="1" height="1" fill="#000"/>
<rect x="250" y="122" width="1" height="1" fill="#000"/>
<rect x="250" y="124" width="1" height="1" fill="#000"/>
<rect x="250" y="126" width="1" height="1" fill="#000"/>
<path d="M267.5 115.5 H265.5 V127.5 H267.5" stroke="#000" stroke-width="1" fill="none" shape-rendering="crispEdges"/>
<path d="M273.5 115.5 H275.5 V127.5 H273.5" stroke="#000" stroke-width="1" fill="none" shape-rendering="crispEdges"/>
<rect x="268" y="117" width="1" height="1" fill="#000"/>
<rect x="268" y="119" width="1" height="1" fill="#000"/>
<rect x="268" y="121" width="1" height="1" fill="#000"/>
<rect x="268" y="123" width="1" height="1" fill="#000"/>
<rect x="268" y="125" width="1" height="1" fill="#000"/>
<rect x="270" y="117" width="1" height="1" fill="#000"/>
<rect x="270" y="125" width="1" height="1" fill="#000"/>
<rect x="272" y="117" width="1" height="1" fill="#000"/>
<rect x="272" y="119" width="1" height="1" fill="#000"/>
<rect x="272" y="121" width="1" height="1" fill="#000"/>
<rect x="272" y="123" width="1" height="1" fill="#000"/>
<rect x="272" y="125" width="1" height="1" fill="#000"/>
<path d="M292.5 115 Q290.5 115 290.5 117 V119.5 Q290.5 121.5 288.8 121.5 Q290.5 121.5 290.5 123.5 V126 Q290.5 128 292.5 128" stroke="#000" stroke-width="1" fill="none" />
<path d="M297.5 115 Q299.5 115 299.5 117 V119.5 Q299.5 121.5 301.2 121.5 Q299.5 121.5 299.5 123.5 V126 Q299.5 128 297.5 128" stroke="#000" stroke-width="1" fill="none" />
<rect x="293" y="117" width="1" height="1" fill="#000"/>
<rect x="293" y="119" width="1" height="1" fill="#000"/>
<rect x="293" y="121" width="1" height="1" fill="#000"/>
<rect x="293" y="123" width="1" height="1" fill="#000"/>
<rect x="293" y="125" width="1" height="1" fill="#000"/>
<rect x="295" y="117" width="1" height="1" fill="#000"/>
<rect x="295" y="125" width="1" height="1" fill="#000"/>
<rect x="297" y="117" width="1" height="1" fill="#000"/>
<rect x="297" y="119" width="1" height="1" fill="#000"/>
<rect x="297" y="121" width="1" height="1" fill="#000"/>
<rect x="297" y="123" width="1" height="1" fill="#000"/>
<rect x="297" y="125" width="1" height="1" fill="#000"/>
<rect x="316" y="112" width="1" height="1" fill="#000"/>
<rect x="316" y="114" width="1" height="1" fill="#000"/>
<rect x="316" y="116" width="1" height="1" fill="#000"/>
<rect x="316" y="118" width="1" height="1" fill="#000"/>
<rect x="318" y="112" width="1" height="1" fill="#000"/>
<rect x="318" y="118" width="1" height="1" fill="#000"/>
<rect x="320" y="112" width="1" height="1" fill="#000"/>
<rect x="320" y="114" width="1" height="1" fill="#000"/>
<rect x="320" y="116" width="1" height="1" fill="#000"/>
<rect x="320" y="118" width="1" height="1" fill="#000"/>
<rect x="315" y="120" width="7" height="1" fill="#000"/>
<rect x="316" y="122" width="1" height="1" fill="#000"/>
<rect x="316" y="124" width="1" height="1" fill="#000"/>
<rect x="316" y="126" width="1" height="1" fill="#000"/>
<rect x="316" y="128" width="1" height="1" fill="#000"/>
<rect x="318" y="122" width="1" height="1" fill="#000"/>
<rect x="318" y="128" width="1" height="1" fill="#000"/>
<rect x="320" y="122" width="1" height="1" fill="#000"/>
<rect x="320" y="124" width="1" height="1" fill="#000"/>
<rect x="320" y="126" width="1" height="1" fill="#000"/>
<rect x="320" y="128" width="1" height="1" fill="#000"/>
<text x="335.4" y="126.4" font-family="Liberation Serif,serif" font-size="14.5" textLength="8" lengthAdjust="spacingAndGlyphs" stroke="#000" stroke-width="0.3">Σ</text>
<rect x="338" y="113" width="3" height="2" fill="#000"/>
<rect x="338" y="128" width="3" height="2" fill="#000"/>
<rect x="346" y="117" width="1" height="1" fill="#000"/>
<rect x="346" y="119" width="1" height="1" fill="#000"/>
<rect x="346" y="121" width="1" height="1" fill="#000"/>
<rect x="346" y="123" width="1" height="1" fill="#000"/>
<rect x="346" y="125" width="1" height="1" fill="#000"/>
<rect x="348" y="117" width="1" height="1" fill="#000"/>
<rect x="348" y="125" width="1" height="1" fill="#000"/>
<rect x="350" y="117" width="1" height="1" fill="#000"/>
<rect x="350" y="119" width="1" height="1" fill="#000"/>
<rect x="350" y="121" width="1" height="1" fill="#000"/>
<rect x="350" y="123" width="1" height="1" fill="#000"/>
<rect x="350" y="125" width="1" height="1" fill="#000"/>
<path d="M359.3 124.4 L361 123.4 L364 128 L367 116.5 H374.6" stroke="#000" stroke-width="1.1" fill="none" />
<rect x="369" y="118" width="1" height="1" fill="#000"/>
<rect x="369" y="120" width="1" height="1" fill="#000"/>
<rect x="369" y="122" width="1" height="1" fill="#000"/>
<rect x="369" y="124" width="1" height="1" fill="#000"/>
<rect x="369" y="126" width="1" height="1" fill="#000"/>
<rect x="371" y="118" width="1" height="1" fill="#000"/>
<rect x="371" y="126" width="1" height="1" fill="#000"/>
<rect x="373" y="118" width="1" height="1" fill="#000"/>
<rect x="373" y="120" width="1" height="1" fill="#000"/>
<rect x="373" y="122" width="1" height="1" fill="#000"/>
<rect x="373" y="124" width="1" height="1" fill="#000"/>
<rect x="373" y="126" width="1" height="1" fill="#000"/>
<rect x="388" y="117" width="5" height="9" fill="url(#ck)" shape-rendering="crispEdges"/>
<rect x="394" y="116" width="3" height="2" fill="#000"/>
<rect x="412" y="117" width="5" height="9" fill="url(#ck)" shape-rendering="crispEdges"/>
<rect x="418" y="125" width="3" height="2" fill="#000"/>
<rect x="436" y="117" width="5" height="9" fill="url(#ck)" shape-rendering="crispEdges"/>
<rect x="442" y="116" width="3" height="2" fill="#000"/>
<rect x="442" y="125" width="3" height="2" fill="#000"/>
</g>
<g id="row5">
<text x="23.65" y="206.90" font-family="Liberation Serif,serif" font-weight="bold" font-size="11.91" fill="#505050"  transform="translate(27.6 0) scale(1.123 1) translate(-27.6 0)">Z</text>
<text x="48.15" y="206.90" font-family="Liberation Serif,serif" font-weight="bold" font-size="12.25" fill="#505050"  transform="translate(51.7 0) scale(1.14 1) translate(-51.7 0)">k</text>
<text x="72.30" y="206.90" font-family="Liberation Serif,serif" font-weight="bold" font-size="11.91" fill="#505050"  transform="translate(75.75 0) scale(1.061 1) translate(-75.75 0)">F</text>
<text x="96.21" y="206.79" font-family="Liberation Serif,serif" font-weight="bold" font-size="11.61" fill="#505050"  transform="translate(99.5 0) scale(1.309 1) translate(-99.5 0)">S</text>
<text x="119.43" y="206.70" font-family="DejaVu Math TeX Gyre,DejaVu Serif,serif" font-size="9.69" fill="#585858" stroke="#505050" stroke-width="0.35" transform="translate(124.0 0) scale(1.16 1) translate(-124.0 0)">𝔄</text>
<text x="144.13" y="206.70" font-family="DejaVu Math TeX Gyre,DejaVu Serif,serif" font-size="9.76" fill="#585858" stroke="#505050" stroke-width="0.35" transform="translate(150.6 0) scale(1.055 1) translate(-150.6 0)">𝔐</text>
<path d="M168.5 203.5 H176.5" stroke="#000" stroke-width="1" fill="none" />
<circle cx="178.5" cy="203.5" r="1.8" fill="none" stroke="#000"/>
<circle cx="198.3" cy="202.6" r="5.2" fill="none" stroke="#000"/>
<path d="M194.7 199 L201.9 206.2 M201.9 199 L194.7 206.2" stroke="#000" stroke-width="1" fill="none" />
<circle cx="222.3" cy="202.6" r="5.2" fill="none" stroke="#000"/>
<path d="M217.1 202.6 H227.5 M222.3 197.4 V207.8" stroke="#000" stroke-width="1" fill="none" />
<path d="M250.2 197.7 L242.7 201.7 L250.2 205.7 Z" stroke="#000" stroke-width="1" fill="none" />
<path d="M267.5 197.7 L275 201.7 L267.5 205.7 Z" stroke="#000" stroke-width="1" fill="none" />
<text x="285.8" y="204.6" font-family="Liberation Serif,serif" font-size="10" fill="#5c667c" textLength="15.2" lengthAdjust="spacingAndGlyphs">[0,1]</text>
<text x="313.19" y="207.56" font-family="Liberation Serif,serif" font-size="15.75" fill="#000"  transform="translate(318.8 0) scale(1.236 1) translate(-318.8 0)">∞</text>
<path d="M335.8 203 L337.3 202 L339.4 207.4 L341.4 195.6 H349.5" stroke="#000" stroke-width="1" fill="none" />
<text x="341.8" y="206.6" font-family="Liberation Serif,serif" font-size="14">2</text>
</g>
<g id="row4">
<path d="M24 173.2 L25.8 172 L28.8 178.6 L33.3 160.6 H74.5" stroke="#000" stroke-width="1.1" fill="none" />
<text x="33.55" y="175.70" font-family="Liberation Sans,sans-serif" font-style="italic" font-size="15.5" fill="#101830" >a</text>
<text x="41.64" y="169.30" font-family="Liberation Serif,serif" font-size="10.5" fill="#101830" >2</text>
<text x="51.66" y="177.49" font-family="Liberation Sans,sans-serif" font-size="13.5" fill="#55557a" >+</text>
<text x="61.28" y="175.70" font-family="Liberation Sans,sans-serif" font-style="italic" font-size="15.5" fill="#101830" >b</text>
<text x="68.84" y="169.30" font-family="Liberation Serif,serif" font-size="10.5" fill="#101830" >2</text>
<text x="99.6" y="169.3" font-family="Liberation Serif,serif" font-size="21.5" fill="#000" stroke="#000" stroke-width="0.3" textLength="27" lengthAdjust="spacingAndGlyphs">lim</text>
<text x="101.15" y="181.40" font-family="Liberation Serif,serif" font-style="italic" font-size="12.5" fill="#202020" >x</text>
<text x="103.07" y="181.03" font-family="Liberation Serif,serif" font-size="18.25" fill="#202020" >→</text>
<text x="117.62" y="182.90" font-family="Liberation Serif,serif" font-size="15.38" fill="#202020" >∞</text>
<path d="M150 170.7 L151.8 169.6 L154.4 176 L158.3 161.8 H201" stroke="#000" stroke-width="1.1" fill="none" />
<text x="159.21" y="174.50" font-family="Liberation Sans,sans-serif" font-style="italic" font-size="13.5" fill="#101830" >b</text>
<text x="165.97" y="169.00" font-family="Liberation Serif,serif" font-size="7.5" fill="#101830" >2</text>
<text x="172.19" y="175.19" font-family="Liberation Sans,sans-serif" font-size="12" fill="#101830" >−</text>
<text x="182.21" y="174.50" font-family="Liberation Sans,sans-serif" font-style="italic" font-size="13.5" fill="#101830" >4</text>
<text x="188.60" y="174.50" font-family="Liberation Sans,sans-serif" font-style="italic" font-size="13.5" fill="#101830" >a</text>
<text x="194.96" y="174.50" font-family="Liberation Sans,sans-serif" font-style="italic" font-size="13.5" fill="#101830" >c</text>
<text x="212.6" y="166.1" font-family="Liberation Sans,sans-serif" font-style="italic" font-size="8.5" fill="#101830">−b±</text>
<path d="M229.5 164 L230.5 163.4 L232 167 L234.4 158.8 H265" stroke="#101830" stroke-width="0.9" fill="none" />
<text x="234.8" y="166.1" font-family="Liberation Sans,sans-serif" font-style="italic" font-size="8.5" fill="#101830" textLength="29.8" lengthAdjust="spacingAndGlyphs">b²−4ac</text>
<rect x="212.2" y="168.8" width="53.2" height="1.5" fill="#101830"/>
<text x="234" y="179.2" font-family="Liberation Sans,sans-serif" font-style="italic" font-size="9.5" fill="#101830">2a</text>
<text x="296.8" y="162.3" font-family="Liberation Serif,serif" font-style="italic" font-size="12.5" fill="#343c4c">n!</text>
<rect x="280" y="167" width="42.5" height="1" fill="#202838"/>
<text x="280.8" y="179.2" font-family="Liberation Serif,serif" font-style="italic" font-size="12.5" fill="#343c4c" textLength="41.4" lengthAdjust="spacing">r!(n−r)!</text>
<text x="359.97" y="164.40" font-family="Liberation Serif,serif" font-size="14.5" fill="#000" >1</text>
<rect x="360" y="168.8" width="8.3" height="1" fill="#000"/>
<text x="360.46" y="182.70" font-family="Liberation Serif,serif" font-size="14.5" fill="#000" >2</text>
</g>
</svg>
</body></html>
